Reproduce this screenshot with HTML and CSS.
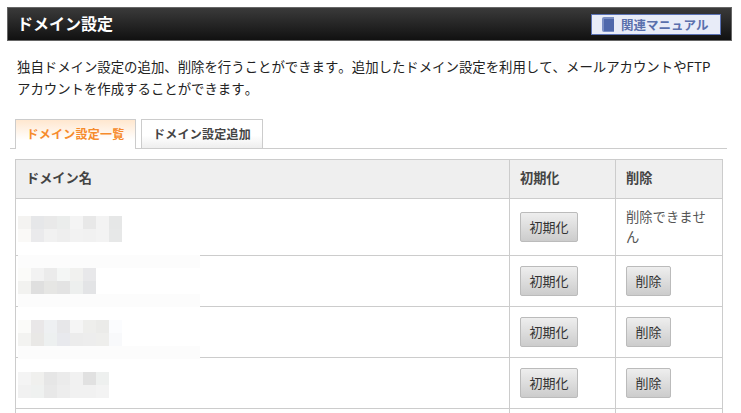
FILE: index.html
```html
<!DOCTYPE html>
<html lang="ja">
<head>
<meta charset="utf-8">
<title>ドメイン設定</title>
<link rel="stylesheet" href="styles.css">
</head>
<body>
<div class="page">
  <header class="title-bar">
    <h1 class="title">ドメイン設定</h1>
    <a class="manual-link" href="#">
      <svg class="manual-icon" width="12" height="15" viewBox="0 0 12 15"><path d="M0 2Q0 0 2 0H12V15H2Q0 15 0 13Z" fill="#7a8ec4"/><rect x="2" y="2" width="10" height="12" fill="#4f68ab"/></svg>
      <span>関連マニュアル</span>
    </a>
  </header>
  <p class="intro">独自ドメイン設定の追加、削除を行うことができます。追加したドメイン設定を利用して、メールアカウントやFTP<br>アカウントを作成することができます。</p>
  <nav class="tabs">
    <a class="tab tab-active" href="#">ドメイン設定一覧</a>
    <a class="tab" href="#">ドメイン設定追加</a>
  </nav>
  <div class="table-wrap">
    <table class="domains">
      <thead>
        <tr><th class="col-name">ドメイン名</th><th class="col-init">初期化</th><th class="col-del">削除</th></tr>
      </thead>
      <tbody>
        <tr class="row-first"><td></td><td><button class="btn btn-init">初期化</button></td><td class="muted">削除できません</td></tr>
        <tr><td></td><td><button class="btn btn-init">初期化</button></td><td><button class="btn btn-del">削除</button></td></tr>
        <tr><td></td><td><button class="btn btn-init">初期化</button></td><td><button class="btn btn-del">削除</button></td></tr>
        <tr><td></td><td><button class="btn btn-init">初期化</button></td><td><button class="btn btn-del">削除</button></td></tr>
        <tr><td></td><td></td><td></td></tr>
      </tbody>
    </table>
    <svg class="mosaic" width="182" height="195" viewBox="0 0 182 195" shape-rendering="crispEdges">
      <g>
        <rect x="0" y="0" width="13" height="13" fill="#f4f3f1"/><rect x="13" y="0" width="13" height="13" fill="#e6e7e9"/><rect x="26" y="0" width="13" height="13" fill="#e9e9e9"/><rect x="39" y="0" width="13" height="13" fill="#ebedec"/><rect x="52" y="0" width="13" height="13" fill="#f4f4f4"/><rect x="65" y="0" width="13" height="13" fill="#e8e8e8"/><rect x="78" y="0" width="13" height="13" fill="#f3f3f3"/><rect x="91" y="0" width="13" height="13" fill="#e6e7e7"/>
        <rect x="0" y="13" width="13" height="13" fill="#faf9f7"/><rect x="13" y="13" width="13" height="13" fill="#eaeaec"/><rect x="26" y="13" width="13" height="13" fill="#f1f1f1"/><rect x="39" y="13" width="13" height="13" fill="#eeeeee"/><rect x="52" y="13" width="13" height="13" fill="#f2f2f2"/><rect x="65" y="13" width="13" height="13" fill="#f1f1f1"/><rect x="78" y="13" width="13" height="13" fill="#f3f3f3"/><rect x="91" y="13" width="13" height="13" fill="#e7e8e8"/>
      </g>
      <g>
        <rect x="0" y="39" width="182" height="13" fill="#fcfcfc"/>
        <rect x="0" y="52" width="13" height="13" fill="#fbfbf9"/><rect x="13" y="52" width="13" height="13" fill="#f2f2f2"/><rect x="26" y="52" width="13" height="13" fill="#ebebeb"/><rect x="39" y="52" width="13" height="13" fill="#f4f6f5"/><rect x="52" y="52" width="13" height="13" fill="#f1f1ef"/><rect x="65" y="52" width="13" height="13" fill="#e8e8ea"/>
        <rect x="0" y="65" width="13" height="13" fill="#f2f2f0"/><rect x="13" y="65" width="13" height="13" fill="#dfdfdf"/><rect x="26" y="65" width="13" height="13" fill="#e6e6e4"/><rect x="39" y="65" width="13" height="13" fill="#e3e3e3"/><rect x="52" y="65" width="13" height="13" fill="#edefee"/><rect x="65" y="65" width="13" height="13" fill="#e3e4e6"/>
        <rect x="0" y="78" width="182" height="13" fill="#fcfcfc"/>
      </g>
      <g>
        <rect x="0" y="104" width="13" height="13" fill="#fbfbf9"/><rect x="13" y="104" width="13" height="13" fill="#e9e7e8"/><rect x="26" y="104" width="13" height="13" fill="#eef0f2"/><rect x="39" y="104" width="13" height="13" fill="#e7e7e9"/><rect x="52" y="104" width="13" height="13" fill="#f5f5f5"/><rect x="65" y="104" width="13" height="13" fill="#eeeeec"/><rect x="78" y="104" width="13" height="13" fill="#ebebe9"/><rect x="91" y="104" width="13" height="13" fill="#fbfcfe"/>
        <rect x="0" y="117" width="13" height="13" fill="#f3f3f1"/><rect x="13" y="117" width="13" height="13" fill="#e9e8e6"/><rect x="26" y="117" width="13" height="13" fill="#edf0f0"/><rect x="39" y="117" width="13" height="13" fill="#e8e9ed"/><rect x="52" y="117" width="13" height="13" fill="#ececec"/><rect x="65" y="117" width="13" height="13" fill="#ededed"/><rect x="78" y="117" width="13" height="13" fill="#eeeeec"/><rect x="91" y="117" width="13" height="13" fill="#f8f9fb"/>
        <rect x="0" y="130" width="182" height="13" fill="#fcfcfc"/>
      </g>
      <g>
        <rect x="0" y="156" width="13" height="13" fill="#f4f4f4"/><rect x="13" y="156" width="13" height="13" fill="#f0f0ee"/><rect x="26" y="156" width="13" height="13" fill="#e6e6e6"/><rect x="39" y="156" width="13" height="13" fill="#ebebeb"/><rect x="52" y="156" width="13" height="13" fill="#f1f1f1"/><rect x="65" y="156" width="13" height="13" fill="#e1e1e1"/><rect x="78" y="156" width="13" height="13" fill="#eef0ef"/>
        <rect x="0" y="169" width="13" height="13" fill="#f1f1f1"/><rect x="13" y="169" width="13" height="13" fill="#eff1f0"/><rect x="26" y="169" width="13" height="13" fill="#e8e8e8"/><rect x="39" y="169" width="13" height="13" fill="#ededed"/><rect x="52" y="169" width="13" height="13" fill="#f1f1f1"/><rect x="65" y="169" width="13" height="13" fill="#f1f1f1"/><rect x="78" y="169" width="13" height="13" fill="#f3f3f3"/>
      </g>
    </svg>
  </div>
</div>
</body>
</html>
```

FILE: styles.css
```css
* {
  box-sizing: border-box;
}

html,
body {
  margin: 0;
  height: 100%;
  overflow: hidden;
  background: #fff;
}

body {
  font-family: "Noto Sans CJK JP", "Liberation Sans", sans-serif;
  font-size: 13px;
  font-kerning: none;
  color: #333;
}

.page {
  width: 741px;
  padding: 7px 9px 0 7px;
}

.title-bar {
  display: flex;
  align-items: center;
  justify-content: space-between;
  height: 34px;
  padding: 0 10px 0 9px;
  border: 1px solid #666;
  background: linear-gradient(#3a3a3a, #111);
}

.title {
  margin: 0 0 2px;
  font-size: 16px;
  line-height: 20px;
  font-weight: 700;
  color: #fff;
}

.manual-link {
  display: flex;
  align-items: center;
  gap: 7px;
  width: 130px;
  height: 21px;
  padding-left: 10px;
  border: 1px solid #5b72b4;
  background: #e8ecf8;
  color: #5a70ad;
  font-size: 12.5px;
  font-weight: 700;
  line-height: 17px;
  text-decoration: none;
}

.manual-icon {
  flex: none;
}

.intro {
  width: 712px;
  margin: 14px 0 0 10px;
  font-size: 13.4px;
  line-height: 22px;
  color: #222;
}

.tabs {
  display: flex;
  gap: 5px;
  margin: 20px 5px 0 3px;
  padding-left: 5px;
  height: 30px;
  border-bottom: 1px solid #ccc;
}

.tab {
  width: 122px;
  height: 29px;
  border: 1px solid #ccc;
  border-bottom: 0;
  background: linear-gradient(#fff 55%, #eee);
  color: #444;
  font-size: 12px;
  letter-spacing: 0.25px;
  font-weight: 700;
  line-height: 27px;
  text-align: center;
  text-decoration: none;
}

.tab-active {
  width: 121px;
  height: 30px;
  background: linear-gradient(#ffe7cf, #fff 70%);
  color: #f68b2c;
}

.table-wrap {
  position: relative;
  margin: 10px 0 0 8px;
  width: 708px;
}

.domains {
  width: 708px;
  table-layout: fixed;
  border-collapse: collapse;
}

.domains th,
.domains td {
  border: 1px solid #ccc;
  padding: 10px;
  text-align: left;
  vertical-align: middle;
  font-size: 13px;
  line-height: 22px;
}

.domains th {
  height: 39px;
  background: #efefef;
  color: #444;
  font-size: 13.2px;
  font-weight: 700;
  padding-top: 7px;
  padding-bottom: 9px;
}

.col-name {
  width: 494px;
}

.col-init {
  width: 106px;
}

.col-del {
  width: 107px;
}

.domains td {
  height: 51px;
}

.row-first td {
  height: 57px;
}

.domains .muted {
  padding-top: 8px;
  padding-bottom: 8px;
  font-size: 13.3px;
  line-height: 20px;
  color: #555;
}

.btn {
  display: block;
  height: 30px;
  padding: 0 0 2px;
  border: 1px solid #bbb;
  border-radius: 2px;
  background: linear-gradient(#eee, #ccc);
  color: #333;
  font-family: inherit;
  font-size: 13px;
  line-height: 25px;
}

.btn-init {
  width: 58px;
}

.btn-del {
  width: 45px;
}

.mosaic {
  position: absolute;
  left: 3px;
  top: 57px;
}
```
